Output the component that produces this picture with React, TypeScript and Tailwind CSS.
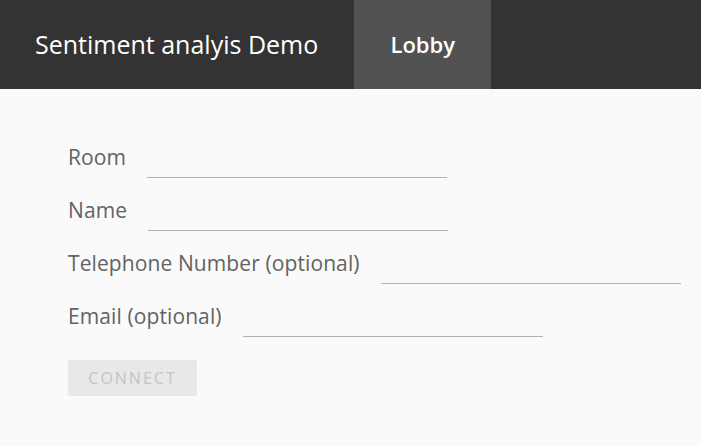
import React from 'react'

const fields = [
  { label: 'Room', id: 'room' },
  { label: 'Name', id: 'name' },
  { label: 'Telephone Number (optional)', id: 'phone' },
  { label: 'Email (optional)', id: 'email' }
]

function App() {
  return (
    <div
      className="min-h-screen w-full bg-[#fafafa]"
      style={{ fontFamily: '"Open Sans", "Liberation Sans", sans-serif' }}
    >
      <header className="flex h-[89px] w-full items-stretch bg-[#333333]">
        <div className="flex items-center whitespace-nowrap pl-[35px] pr-[36px] text-[25px] text-white">
          Sentiment analyis Demo
        </div>
        <div className="flex w-[137px] items-center justify-center bg-[#525252] text-[22px] font-semibold text-white">
          Lobby
        </div>
      </header>

      <main className="px-[68px] pt-[54px]">
        <form className="flex flex-col">
          {fields.map(field => (
            <div key={field.id} className="flex h-[53px] items-start">
              <label
                htmlFor={field.id}
                className="whitespace-nowrap text-[21px] leading-[28px] tracking-[0.1px] text-[#626262]"
              >
                {field.label}
              </label>
              <input
                id={field.id}
                type="text"
                className="ml-[21px] h-[35px] w-[300px] shrink-0 border-b border-[#b0b0b0] bg-transparent text-[18px] outline-none"
              />
            </div>
          ))}
          <div className="pt-[5px]">
            <button
              type="button"
              disabled
              className="h-[36px] w-[129px] rounded-[3px] bg-[#e8e8e8] text-[16px] tracking-[2px] text-[#c4c4c4]"
            >
              CONNECT
            </button>
          </div>
        </form>
      </main>
    </div>
  )
}

export default App
